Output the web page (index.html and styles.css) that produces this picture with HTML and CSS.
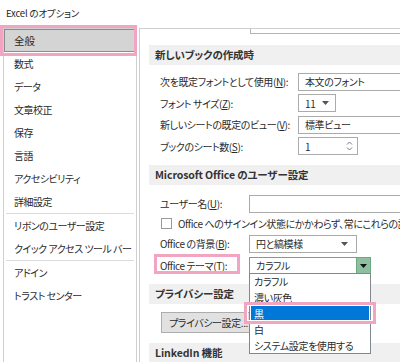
FILE: index.html
```html
<!DOCTYPE html>
<html lang="ja">
<head>
<meta charset="utf-8">
<title>Excel のオプション</title>
<link rel="stylesheet" href="styles.css">
</head>
<body>
<div class="title">Excel のオプション</div>
<div class="main">
  <nav class="nav">
    <div class="nav-item selected">全般</div>
    <div class="nav-item">数式</div>
    <div class="nav-item">データ</div>
    <div class="nav-item">文章校正</div>
    <div class="nav-item">保存</div>
    <div class="nav-item">言語</div>
    <div class="nav-item">アクセシビリティ</div>
    <div class="nav-item">詳細設定</div>
    <div class="sep"></div>
    <div class="nav-item">リボンのユーザー設定</div>
    <div class="nav-item">クイック アクセス ツール バー</div>
    <div class="sep"></div>
    <div class="nav-item">アドイン</div>
    <div class="nav-item">トラスト センター</div>
  </nav>
  <div class="content">
    <div class="prev-field"></div>
    <div class="bar bar-first">新しいブックの作成時</div>
    <div class="rows rows-first">
      <div class="row r21"><span class="label l-wide">次を既定フォントとして使用(<u>N</u>):</span><div class="field f-long">本文のフォント</div></div>
      <div class="row r22"><span class="label l-wide">フォント サイズ(<u>Z</u>):</span><div class="field f-size"><span class="ftext">11</span><svg class="arrow" width="7" height="4" viewBox="0 0 7 4"><path d="M0 0h7L3.5 4z" fill="#555"/></svg></div></div>
      <div class="row r21"><span class="label l-wide">新しいシートの既定のビュー(<u>V</u>):</span><div class="field f-long">標準ビュー</div></div>
      <div class="row r22"><span class="label l-wide">ブックのシート数(<u>S</u>):</span><div class="field f-spin"><span class="ftext">1</span><svg class="spin" width="7" height="12" viewBox="0 0 7 12"><path d="M1 4.5L3.5 2 6 4.5M1 7.5L3.5 10 6 7.5" fill="none" stroke="#777" stroke-width="1"/></svg></div></div>
    </div>
    <div class="bar bar-mid">Microsoft Office のユーザー設定</div>
    <div class="rows rows-second">
      <div class="row r21"><span class="label l-narrow">ユーザー名(<u>U</u>):</span><div class="field f-user"></div></div>
      <div class="row r19"><span class="checkbox"></span><span class="check-text">Office へのサインイン状態にかかわらず、常にこれらの設定を使用する(<u>A</u>)</span></div>
      <div class="row r21"><span class="label l-narrow">Office の背景(<u>B</u>):</span><div class="field f-bg"><span class="ftext">円と縞模様</span><svg class="arrow" width="7" height="4" viewBox="0 0 7 4"><path d="M0 0h7L3.5 4z" fill="#555"/></svg></div></div>
      <div class="row r21 row-theme"><span class="label l-narrow">Office テーマ(<u>T</u>):</span><div class="field f-theme"><span class="ftext">カラフル</span><span class="theme-btn"><svg width="7" height="4" viewBox="0 0 7 4"><path d="M0 0h7L3.5 4z" fill="#111"/></svg></span></div></div>
    </div>
    <div class="bar bar-mid">プライバシー設定</div>
    <div class="btn-row"><span class="button">プライバシー設定...</span></div>
    <div class="bar bar-last">LinkedIn 機能</div>
  </div>
</div>

<div class="dropdown">
  <div class="dd-item">カラフル</div>
  <div class="dd-item">濃い灰色</div>
  <div class="dd-item active">黒</div>
  <div class="dd-item">白</div>
  <div class="dd-item">システム設定を使用する</div>
</div>

<div class="pink pink-nav"></div>
<div class="pink pink-label"></div>
<div class="pink pink-item"></div>
</body>
</html>
```

FILE: styles.css
```css
* { box-sizing: border-box; margin: 0; padding: 0; }
html, body { width: 400px; height: 362px; overflow: hidden; background: #fff; }
body {
  font-family: "Noto Sans CJK JP", sans-serif;
  font-size: 10px;
  letter-spacing: -0.4px;
  color: #2b2b2b;
  font-feature-settings: "palt";
  position: relative;
}
u { text-decoration: underline; text-underline-offset: 1px; }

.title { height: 28px; padding-left: 6px; line-height: 26px; font-size: 9.5px; letter-spacing: -0.2px; color: #1e1e1e; }

.main { display: flex; height: 334px; padding-left: 3px; }

.nav { width: 134px; flex: none; border: 1px solid #cfcfcf; border-bottom: none; }
.nav-item { height: 23px; line-height: 23px; padding-left: 10px; white-space: nowrap; letter-spacing: -0.5px; }
.nav-item.selected { background: #d4d4d4; border: 1px solid #8c8c8c; padding-left: 9px; line-height: 21px; letter-spacing: 0; font-size: 10.5px; }
.sep { height: 1px; background: #dcdcdc; margin: 0 2px; }

.content {
  flex: 1;
  margin-left: 2px;
  border-left: 1px solid #cfcfcf;
  border-top: 1px solid #cfcfcf;
  overflow: hidden;
  display: flex;
  flex-direction: column;
}
.prev-field { height: 5px; margin-left: 110px; border: 1px solid #b4b4b4; border-top: none; border-right: none; flex: none; }

.bar {
  flex: none;
  height: 20px;
  line-height: 20px;
  margin-left: 9px;
  padding-left: 6px;
  background: #f0f0f0;
  font-size: 10.5px;
  letter-spacing: -0.1px;
  font-weight: 600;
  white-space: nowrap;
  color: #333;
}
.bar-first { margin-top: 11px; }
.bar-mid { margin-top: 8px; }
.bar-last { margin-top: 10px; }

.rows { padding-left: 20px; flex: none; }
.rows-first { margin-top: 6px; }
.rows-second { margin-top: 8px; }
.row { display: flex; align-items: center; white-space: nowrap; }
.r21 { height: 21px; }
.r22 { height: 22px; }
.r19 { height: 19px; }
.row-theme { margin-top: 1px; }

.label { flex: none; }
.l-wide { width: 138px; }
.l-narrow { width: 89px; }

.field {
  flex: none;
  height: 18px;
  border: 1px solid #ababab;
  background: #fff;
  padding-left: 6px;
  display: flex;
  align-items: center;
  white-space: nowrap;
}
.f-long { width: 120px; }
.f-size { width: 38px; justify-content: space-between; padding-right: 6px; }
.f-spin { width: 60px; justify-content: space-between; padding-right: 4px; }
.f-user { width: 160px; }
.f-bg { width: 108px; justify-content: space-between; padding-right: 8px; }
.f-theme { width: 122px; height: 17px; justify-content: space-between; padding-right: 0; border-color: #6da884; }
.theme-btn {
  width: 14px;
  align-self: stretch;
  background: #8cc09f;
  border-left: 1px solid #6da884;
  display: flex;
  align-items: center;
  justify-content: center;
}

.checkbox { flex: none; width: 11px; height: 11px; border: 1px solid #9a9a9a; margin-left: 1px; margin-right: 6px; }
.check-text { flex: none; }

.btn-row { flex: none; margin-top: 8px; padding-left: 21px; display: flex; }
.button {
  height: 21px;
  line-height: 19px;
  padding: 0 12px 0 7px;
  background: #e1e1e1;
  border: 1px solid #adadad;
  white-space: nowrap;
}

.dropdown {
  position: absolute;
  left: 249px;
  top: 273px;
  width: 122px;
  height: 81px;
  background: #fff;
  border: 1px solid #828790;
  padding: 0 1px;
}
.dd-item { height: 16px; line-height: 16px; padding-left: 3px; white-space: nowrap; }
.dd-item.active { background: #0078d7; color: #fff; }

.pink { position: absolute; border: 3px solid #f2a5c3; }
.pink-nav { left: 0; top: 25px; width: 137px; height: 31px; }
.pink-label { left: 154px; top: 254px; width: 86px; height: 20px; }
.pink-item { left: 244px; top: 302px; width: 132px; height: 22px; box-shadow: inset 0 0 0 1px #fff; }
```
